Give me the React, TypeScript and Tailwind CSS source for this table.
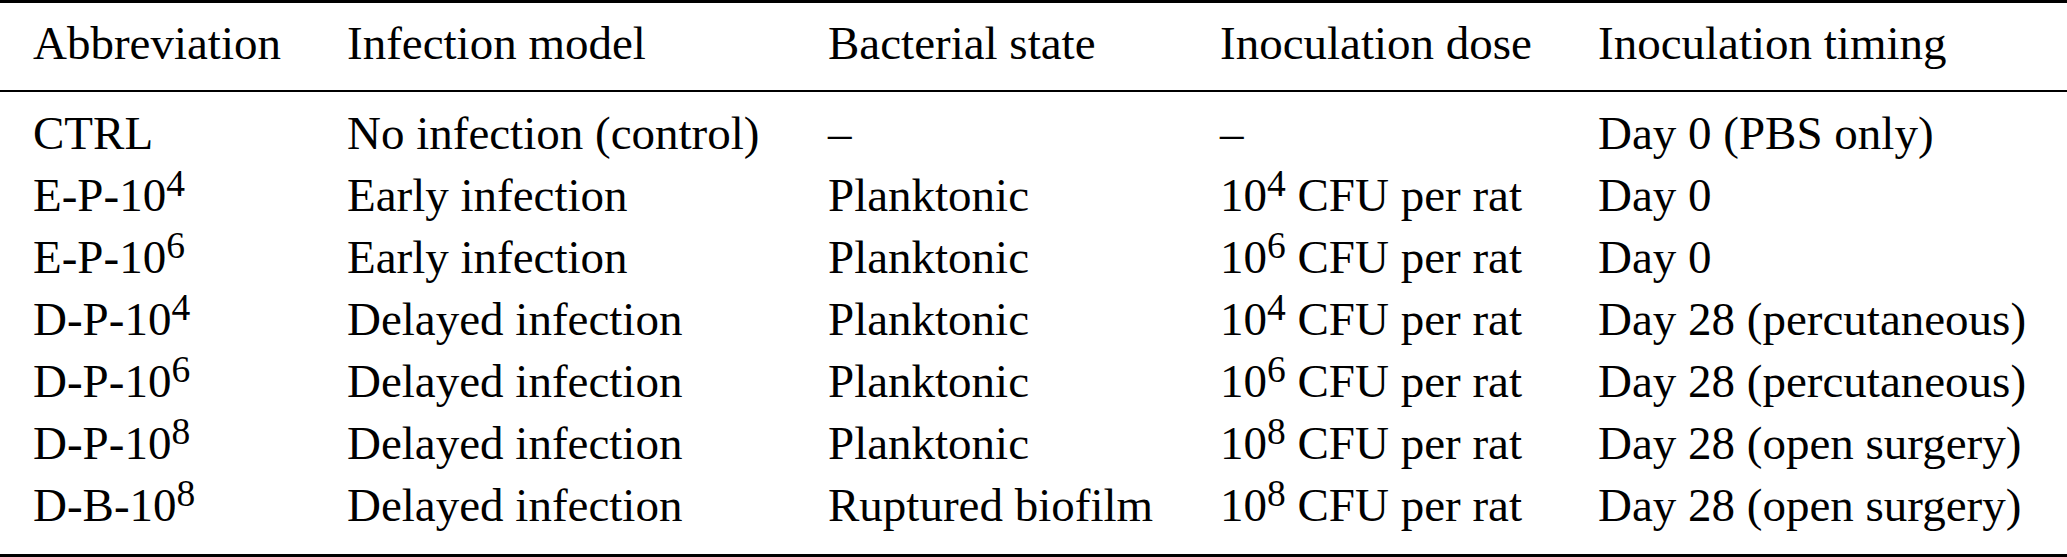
import type { ReactNode } from 'react';

type Row = {
  abbr: ReactNode;
  model: string;
  state: string;
  dose: ReactNode;
  timing: string;
};

function Pow({ exp }: { exp: number }) {
  return (
    <>
      10<sup className="text-[37.5px] -top-[15px]">{exp}</sup>
    </>
  );
}

const rows: Row[] = [
  { abbr: 'CTRL', model: 'No infection (control)', state: '–', dose: '–', timing: 'Day 0 (PBS only)' },
  { abbr: <>E-P-<Pow exp={4} /></>, model: 'Early infection', state: 'Planktonic', dose: <><Pow exp={4} /> CFU per rat</>, timing: 'Day 0' },
  { abbr: <>E-P-<Pow exp={6} /></>, model: 'Early infection', state: 'Planktonic', dose: <><Pow exp={6} /> CFU per rat</>, timing: 'Day 0' },
  { abbr: <>D-P-<Pow exp={4} /></>, model: 'Delayed infection', state: 'Planktonic', dose: <><Pow exp={4} /> CFU per rat</>, timing: 'Day 28 (percutaneous)' },
  { abbr: <>D-P-<Pow exp={6} /></>, model: 'Delayed infection', state: 'Planktonic', dose: <><Pow exp={6} /> CFU per rat</>, timing: 'Day 28 (percutaneous)' },
  { abbr: <>D-P-<Pow exp={8} /></>, model: 'Delayed infection', state: 'Planktonic', dose: <><Pow exp={8} /> CFU per rat</>, timing: 'Day 28 (open surgery)' },
  { abbr: <>D-B-<Pow exp={8} /></>, model: 'Delayed infection', state: 'Ruptured biofilm', dose: <><Pow exp={8} /> CFU per rat</>, timing: 'Day 28 (open surgery)' },
];

const headers = ['Abbreviation', 'Infection model', 'Bacterial state', 'Inoculation dose', 'Inoculation timing'];

const cols = 'grid grid-cols-[314px_481px_392px_378px_1fr] pl-[33px] whitespace-nowrap';

export default function App() {
  return (
    <div className="w-[2067px] h-[557px] bg-white text-black text-[47px] leading-[62px] font-['Liberation_Serif']">
      {/* toprule */}
      <div className="h-[3px] bg-black" />

      {/* header */}
      <div className={`${cols} pt-[9px] pb-[16px]`}>
        {headers.map((h) => (
          <div key={h}>{h}</div>
        ))}
      </div>

      {/* midrule */}
      <div className="h-[2px] bg-black" />

      {/* body */}
      <div className="pt-[10px] pb-[18px]">
        {rows.map((r, i) => (
          <div key={i} className={cols}>
            <div>{r.abbr}</div>
            <div>{r.model}</div>
            <div>{r.state}</div>
            <div>{r.dose}</div>
            <div>{r.timing}</div>
          </div>
        ))}
      </div>

      {/* bottomrule */}
      <div className="h-[3px] bg-black" />
    </div>
  );
}
